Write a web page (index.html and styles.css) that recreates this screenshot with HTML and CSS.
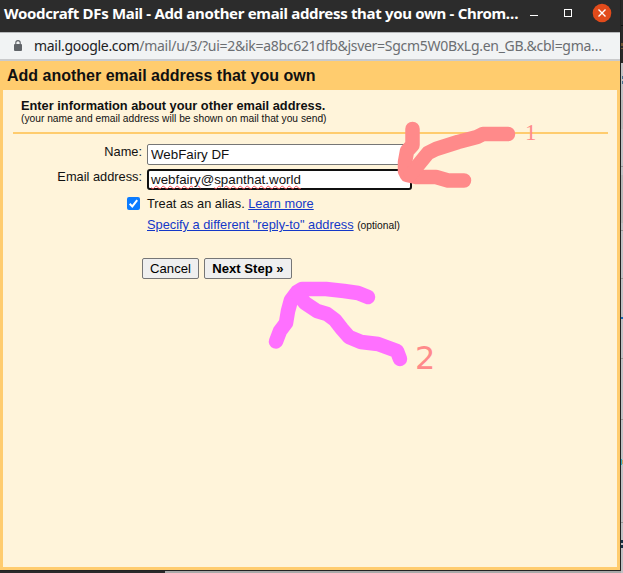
FILE: index.html
```
<!DOCTYPE html>
<html lang="en">
<head>
<meta charset="utf-8">
<title>Add another email address that you own</title>
<link rel="stylesheet" href="styles.css">
</head>
<body>
<main class="window">
  <header class="titlebar">
    <span class="window-title">Woodcraft DFs Mail - Add another email address that you own - Chrom…</span>
    <svg class="window-controls" width="90" height="32" viewBox="0 0 90 32" fill="none">
      <path d="M0 15.5h8" stroke="#fff"/>
      <rect x="34.5" y="9.5" width="7" height="7" stroke="#fff"/>
      <circle cx="72" cy="13" r="9.3" fill="#e24b1b"/>
      <path d="M68.5 9.5l7 7m0-7l-7 7" stroke="#fff" stroke-width="1.4"/>
    </svg>
  </header>
  <div class="addressbar">
    <svg class="lock" width="8" height="11" viewBox="0 0 8 11" fill="none"><rect y="4" width="8" height="7" rx="1" fill="#5f6368"/><path d="M1.8 4V2.8a2.2 2.2 0 0 1 4.4 0V4" stroke="#5f6368" stroke-width="1.1"/></svg>
    <span class="url"><span class="host">mail.google.com</span>/mail/u/3/?ui=2&amp;ik=a8bc621dfb&amp;jsver=Sgcm5W0BxLg.en_GB.&amp;cbl=gma…</span>
  </div>
  <section class="page">
    <h1>Add another email address that you own</h1>
    <div class="panel">
      <div class="intro">
        <h2>Enter information about your other email address.</h2>
        <p>(your name and email address will be shown on mail that you send)</p>
      </div>
      <form class="form">
        <label class="label" for="name">Name:</label>
        <input class="field" id="name" value="WebFairy DF">
        <label class="label" for="email">Email address:</label>
        <div class="field focused" id="email"><span class="misspelt">webfairy</span>@<span class="misspelt">spanthat.world</span></div>
        <span class="check"><svg width="13" height="13" viewBox="0 0 13 13"><rect width="13" height="13" rx="2" fill="#0b7bff"/><path d="M2.7 6.8l2.6 2.6 4.9-6.2" fill="none" stroke="#fff" stroke-width="2"/></svg></span>
        <div class="option">Treat as an alias. <a href="#">Learn more</a></div>
        <div class="option reply"><a href="#">Specify a different "reply-to" address</a> <small>(optional)</small></div>
        <div class="actions"><button type="button">Cancel</button><button type="button" class="next">Next Step »</button></div>
      </form>
    </div>
  </section>
</main>
<aside class="desktop">
  <svg width="2" height="573" viewBox="0 0 2 573">
    <path fill="#292929" d="M0 0h2v63H0z"/><path fill="#111" d="M0 25h2v1H0z"/><path fill="#705535" d="M0 43h2v3H0zm0 5h2v1H0z"/>
    <path fill="#c2c2c5" d="M0 63h2v510H0z"/><path fill="#b8b8b8" d="M0 100h2v29H0zm0 75h2v48H0z"/>
    <path fill="#999" d="M0 166h2v1H0zm0 64h2v1H0zm0 48h2v1H0zm0 80h2v1H0zm0 61h2v1H0zm0 103h2v1H0z"/>
    <path fill="#46708e" d="M1 76h1v3H1zm0 5h1v3H1z"/><path fill="#1769b3" d="M0 317h2v2H0z"/><path fill="#38abc0" d="M0 459h1v6H0z"/><path fill="#d2a35e" d="M1 460h1v4H1z"/><path fill="#173044" d="M0 540h2v3H0zm0 5h2v3H0z"/>
  </svg>
</aside>
<footer class="under"></footer>
<svg class="annotations" width="623" height="573" viewBox="0 0 623 573" fill="none" stroke-linecap="round" stroke-linejoin="round">
  <g stroke="#ff8a8a" stroke-width="14.5">
    <path d="M412.500 129V145L407 151L405 162V171L407 175L416 177H436L448 180.500H464"/>
    <path d="M508 134H483L477 137L458 142L436 149L428 153L419 164L411 174"/>
  </g>
  <g stroke="#ff70ff" stroke-width="14.500">
    <path d="M276 341.500L280 331L286 323L288 311L291 300L297 292L302 289H326L344 291L358 293L368 297"/>
    <path d="M297 293L305 303L317 311L327 314L335 320L342 329L349 337L361 342L378 344L397 351L400 359"/>
  </g>
  <g fill="#ff8a8a">
    <text class="mark-one" x="525" y="140">1</text>
    <text class="mark-two" x="415" y="369">2</text>
  </g>
</svg>
</body>
</html>
```
FILE: styles.css
```
* { box-sizing: border-box; }
body {
  margin: 0;
  width: 623px;
  height: 573px;
  overflow: hidden;
  position: relative;
  display: grid;
  grid-template: 571px 2px / 621px 2px;
  background: #bdbdbd;
  font: 12.8px/15px "Liberation Sans", Arial, sans-serif;
  color: #111;
}
.window {
  display: flex;
  flex-direction: column;
  border-right: 1px solid #222;
  border-bottom: 1px solid #222;
}
.titlebar {
  height: 32px;
  display: flex;
  padding-left: 4px;
  background: #2c2c2c;
  color: #fff;
}
.window-title {
  width: 526px;
  font: bold 15px/27px "Noto Sans", "Open Sans", sans-serif;
  white-space: nowrap;
  letter-spacing: -0.32px;
}
.addressbar {
  height: 29px;
  display: flex;
  padding-left: 14px;
  background: #f1f3f4;
  border-top: 1px solid #b6b8ba;
  border-bottom: 2px solid #c9cacc;
}
.lock { margin: 7px 12px 0 0; }
.url {
  font: 14px/25px "Noto Sans", "Open Sans", sans-serif;
  color: #6b6e72;
  white-space: nowrap;
  letter-spacing: -0.29px;
}
.host { color: #202124; }
.page {
  flex: 1;
  display: flex;
  flex-direction: column;
  padding: 0 3px 3px;
  background: #ffcc6e;
}
h1 { margin: 0; padding-left: 4px; height: 29px; font-size: 16px; line-height: 30px; }
.panel { flex: 1; padding: 8px 9px 0 10px; background: #fff4da; }
.intro { height: 36px; padding-left: 8px; border-bottom: 2px solid #ffcc6e; }
h2 { margin: 0; font-size: 12.8px; line-height: 15px; }
.intro p { margin: 0; font-size: 10.24px; line-height: 11px; }
.form {
  display: grid;
  grid-template-columns: 129px 265px;
  grid-template-rows: 25px 28px 21px 40px 22px;
  column-gap: 5px;
  padding-top: 10px;
}
.label { text-align: right; }
.field {
  width: 265px;
  height: 21px;
  padding: 0 3px;
  border: 1px solid #767676;
  border-radius: 2px;
  background: #fff;
  color: #111;
  font: 13.333px/19px "Liberation Sans", Arial, sans-serif;
}
.focused { border: 2px solid #101010; border-radius: 3px; padding: 0 2px; line-height: 18px; }
.misspelt {
  text-decoration: underline wavy #ff4b55;
  text-decoration-thickness: 0.5px;
  text-underline-offset: 1px;
}
.check { justify-self: end; margin-right: 2px; }
.option { white-space: nowrap; line-height: 14px; }
.reply { grid-column: 2; }
a { color: #1438c8; text-underline-offset: 1px; }
small { font-size: 10.24px; }
.actions { grid-column: 1 / 3; display: flex; gap: 5px; padding-left: 129px; }
button {
  width: 57px;
  height: 21px;
  padding: 0;
  border: 1px solid #767676;
  border-radius: 2px;
  background: #efefef;
  color: #000;
  font: 13.1px/15px "Liberation Sans", Arial, sans-serif;
}
.next { width: 88px; font-weight: bold; }
.desktop { height: 573px; }
.under { grid-column: 1; grid-row: 2; background: linear-gradient(to right, #29292a 165px, #a9a9a9 165px); }
.annotations { position: absolute; left: 0; top: 0; pointer-events: none; }
.mark-one { font: 23px "Liberation Serif", serif; }
.mark-two { font: 32px "DejaVu Sans", sans-serif; }
```
